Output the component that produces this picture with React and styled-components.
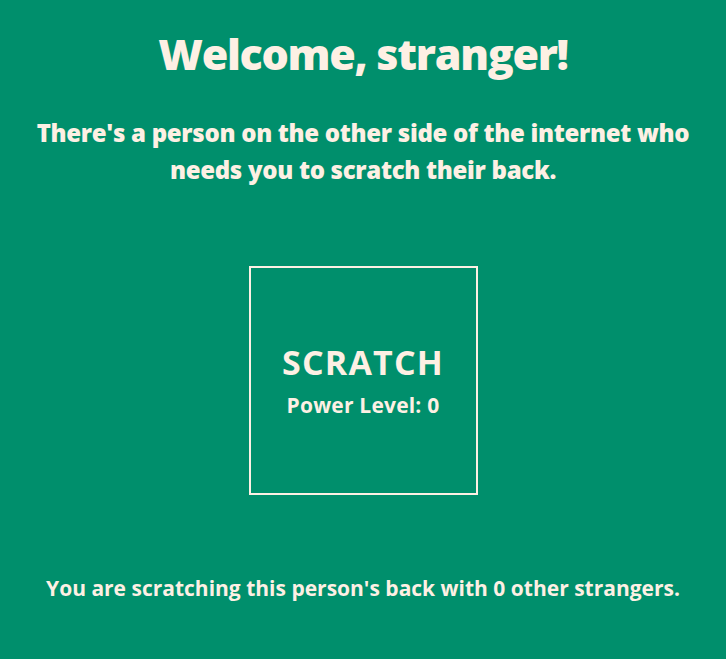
import React, { useState } from 'react';
import styled, { createGlobalStyle } from 'styled-components';

const GlobalStyle = createGlobalStyle`
  html, body {
    margin: 0;
    padding: 0;
    background: #008f6c;
  }
  body {
    font-family: "Open Sans", Roboto, "Liberation Sans", sans-serif;
    color: #fdf0e4;
  }
`;

const Page = styled.div`
  display: flex;
  flex-direction: column;
  align-items: center;
  text-align: center;
  min-height: 659px;
  padding-top: 24px;
  box-sizing: border-box;
`;

const Title = styled.h1`
  margin: 0;
  font-size: 43px;
  font-weight: 800;
  line-height: 60px;
  letter-spacing: -1.3px;
`;

const Intro = styled.p`
  margin: 30px 0 0;
  width: 680px;
  font-size: 24px;
  font-weight: 800;
  line-height: 37px;
  letter-spacing: -0.3px;
`;

const ScratchBox = styled.button`
  margin-top: 78px;
  width: 229px;
  height: 229px;
  border: 2px solid #fdf0e4;
  background: transparent;
  color: inherit;
  font-family: inherit;
  display: flex;
  flex-direction: column;
  align-items: center;
  justify-content: center;
  cursor: pointer;
  padding: 0;
`;

const ScratchLabel = styled.div`
  font-size: 34px;
  font-weight: 700;
  line-height: 40px;
  letter-spacing: 1.2px;
  margin-bottom: 9px;
`;

const PowerLevel = styled.div`
  font-size: 21px;
  font-weight: 700;
  line-height: 28px;
  letter-spacing: 0.2px;
`;

const Footer = styled.p`
  margin: 79px 0 0;
  font-size: 21px;
  font-weight: 700;
  line-height: 28px;
`;

export default function App() {
  const [power, setPower] = useState(0);

  return (
    <Page>
      <GlobalStyle />
      <Title>Welcome, stranger!</Title>
      <Intro>There's a person on the other side of the internet who needs you to scratch their back.</Intro>
      <ScratchBox onClick={() => setPower(power + 1)}>
        <ScratchLabel>SCRATCH</ScratchLabel>
        <PowerLevel>Power Level: {power}</PowerLevel>
      </ScratchBox>
      <Footer>You are scratching this person's back with 0 other strangers.</Footer>
    </Page>
  );
}
